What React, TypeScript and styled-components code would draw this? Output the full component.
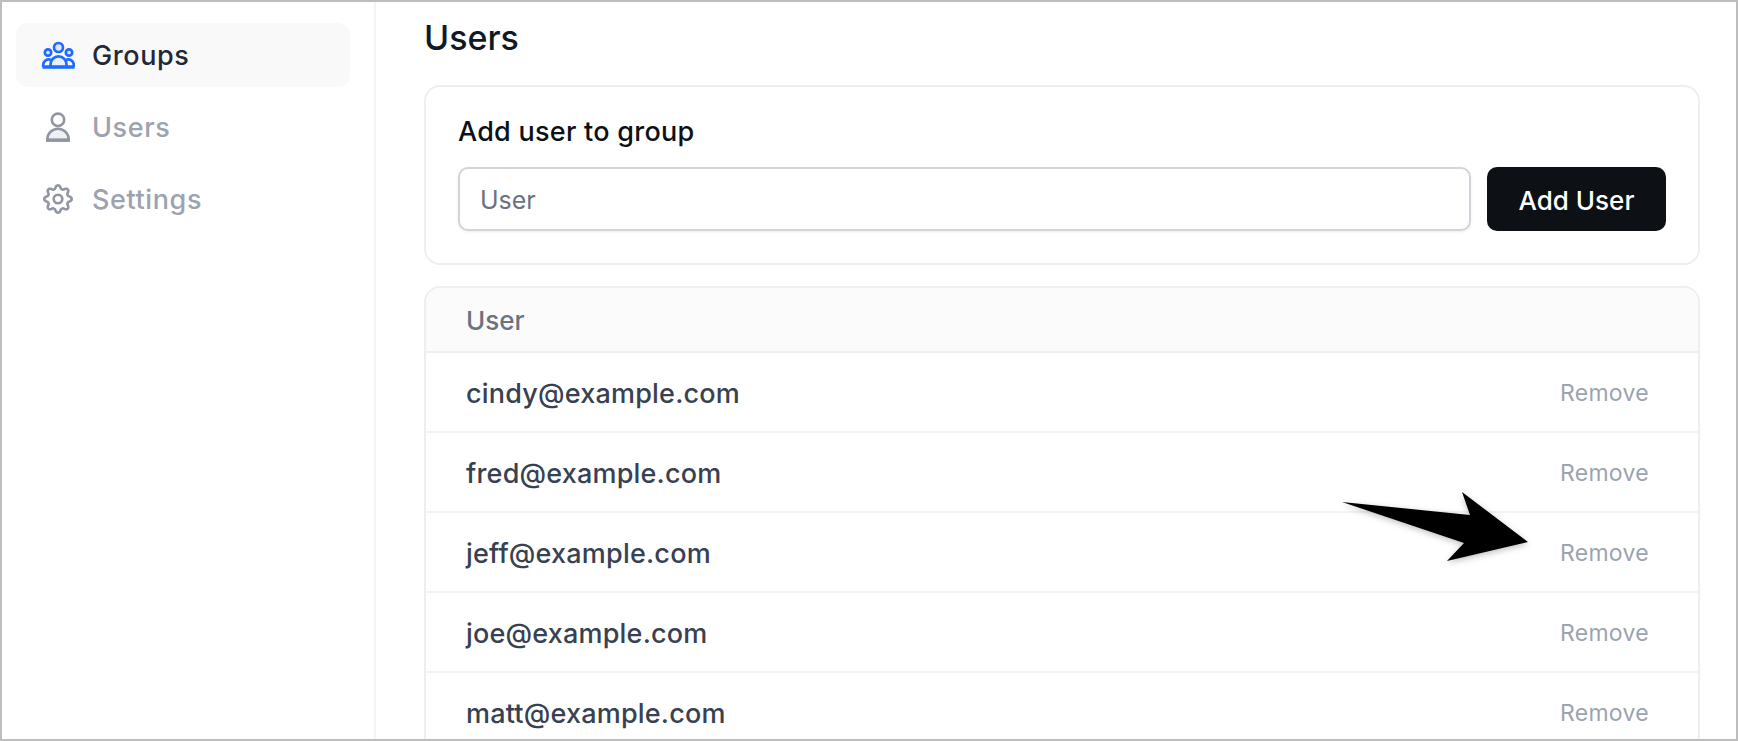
import React from "react";
import styled, { createGlobalStyle } from "styled-components";

const users = [
  "cindy@example.com",
  "fred@example.com",
  "jeff@example.com",
  "joe@example.com",
  "matt@example.com",
];

// eight soft lobes around the centre
function gearPath() {
  const pts: string[] = [];
  for (let i = 0; i < 96; i++) {
    const a = (i / 96) * Math.PI * 2;
    const r = 12 + 1.6 * Math.max(-0.8, Math.min(0.8, Math.cos(a * 8))) / 0.8;
    pts.push(`${(17 + r * Math.sin(a)).toFixed(2)} ${(15 - r * Math.cos(a)).toFixed(2)}`);
  }
  return `M${pts.join("L")}Z`;
}

function GroupsIcon() {
  return (
    <NavSvg viewBox="0 0 34 30" fill="none" stroke="currentColor" strokeWidth="2.7">
      <circle cx="17.5" cy="7.5" r="4.5" fill="#dbe7ff" />
      <circle cx="7" cy="12.5" r="3.2" fill="#dbe7ff" />
      <circle cx="28" cy="12.5" r="3.2" fill="#dbe7ff" />
      <path d="M9.5 27v-2.6a8 8 0 0 1 16 0V27z" fill="#e8f0ff" />
      <path d="M2.2 27v-2.2a5.6 5.6 0 0 1 7.6-5.1M32.8 27v-2.2a5.6 5.6 0 0 0-7.6-5.1" />
      <path d="M1.5 27h32" strokeWidth="3.4" />
    </NavSvg>
  );
}

function UserIcon() {
  return (
    <NavSvg viewBox="0 0 34 30" fill="none" stroke="currentColor" strokeWidth="2.6">
      <circle cx="17" cy="7.8" r="6.2" />
      <path d="M6.3 28v-.6a10.7 10.7 0 0 1 21.4 0v.6z" fill="#eef0f3" />
      <path d="M5 28.2h24" strokeWidth="3.4" />
    </NavSvg>
  );
}

function GearIcon() {
  return (
    <NavSvg viewBox="0 0 34 30" fill="none" stroke="currentColor" strokeWidth="2.6" strokeLinejoin="round">
      <path d={gearPath()} />
      <circle cx="17" cy="15" r="4.3" />
    </NavSvg>
  );
}

export default function App() {
  return (
    <Frame>
      <GlobalStyle />
      <Sidebar>
        <NavItem $active>
          <NavIcon $active><GroupsIcon /></NavIcon>
          Groups
        </NavItem>
        <NavItem>
          <NavIcon><UserIcon /></NavIcon>
          Users
        </NavItem>
        <NavItem>
          <NavIcon><GearIcon /></NavIcon>
          Settings
        </NavItem>
      </Sidebar>
      <Main>
        <Title>Users</Title>
        <Card>
          <CardLabel>Add user to group</CardLabel>
          <AddRow>
            <UserInput placeholder="User" />
            <AddButton>Add User</AddButton>
          </AddRow>
        </Card>
        <Table>
          <TableHead>User</TableHead>
          {users.map((email) => (
            <Row key={email}>
              <Email>{email}</Email>
              <RemoveLink>Remove</RemoveLink>
            </Row>
          ))}
        </Table>
      </Main>
      <Arrow viewBox="0 0 200 80">
        <path d="M2 12 L130 25 L122 2 L188 52 L107 71 L124 53 Z" fill="#000" />
      </Arrow>
    </Frame>
  );
}

const GlobalStyle = createGlobalStyle`
  html, body {
    margin: 0;
    padding: 0;
    background: #fff;
  }
  * {
    box-sizing: border-box;
  }
`;

const Frame = styled.div`
  position: relative;
  display: flex;
  height: 741px;
  overflow: hidden;
  border: 2px solid #bdbdbd;
  background: #fff;
  font-family: Inter, "Liberation Sans", sans-serif;
`;

const Sidebar = styled.nav`
  width: 374px;
  flex-shrink: 0;
  padding: 21px 24px 0 14px;
  border-right: 2px solid #f3f4f6;
  display: flex;
  flex-direction: column;
  gap: 8px;
`;

const NavItem = styled.a<{ $active?: boolean }>`
  display: flex;
  align-items: center;
  height: 64px;
  padding-left: 25px;
  border-radius: 12px;
  font-size: 27px;
  letter-spacing: 0.6px;
  font-weight: 500;
  color: ${(p) => (p.$active ? "#1f2937" : "#9ca3af")};
  background: ${(p) => (p.$active ? "#f9f9f9" : "transparent")};
`;

const NavIcon = styled.span<{ $active?: boolean }>`
  width: 34px;
  margin-right: 17px;
  display: flex;
  color: ${(p) => (p.$active ? "#1f6bff" : "#8f95a1")};
`;

const NavSvg = styled.svg`
  width: 34px;
  height: 30px;
`;

const Main = styled.main`
  flex: 1;
  min-width: 0;
  padding: 16px 36px 0 48px;
`;

const Title = styled.h1`
  margin: 0 0 27px;
  font-size: 34px;
  line-height: 40px;
  font-weight: 500;
  color: #111827;
`;

const Card = styled.section`
  height: 180px;
  padding: 29px 32px 0 32px;
  border: 2px solid #eeeef2;
  border-radius: 16px;
`;

const CardLabel = styled.div`
  font-size: 27px;
  letter-spacing: 0.25px;
  line-height: 32px;
  font-weight: 500;
  color: #0d1117;
  margin-bottom: 19px;
`;

const AddRow = styled.div`
  display: flex;
  gap: 16px;
`;

const UserInput = styled.input`
  flex: 1;
  min-width: 0;
  height: 64px;
  padding: 2px 20px 0;
  border: 2px solid #d1d5db;
  border-radius: 10px;
  box-shadow: 0 1px 3px rgba(0, 0, 0, 0.08);
  font-family: inherit;
  font-size: 25px;
  &::placeholder {
    color: #6b7280;
  }
`;

const AddButton = styled.button`
  width: 179px;
  height: 64px;
  padding: 2px 0 0;
  border: 0;
  border-radius: 10px;
  background: #0d1014;
  color: #fff;
  font-family: inherit;
  font-size: 26px;
  font-weight: 500;
`;

const Table = styled.section`
  margin-top: 21px;
  border: 2px solid #eeeef2;
  border-radius: 16px;
  overflow: hidden;
`;

const TableHead = styled.div`
  height: 65px;
  display: flex;
  align-items: center;
  padding: 1px 0 0 40px;
  background: #fbfbfc;
  border-bottom: 2px solid #eeeef2;
  font-size: 26px;
  font-weight: 500;
  color: #6b7280;
`;

const Row = styled.div`
  height: 80px;
  display: flex;
  align-items: center;
  justify-content: space-between;
  padding: 2px 49px 0 40px;
  border-bottom: 2px solid #f3f4f6;
`;

const Email = styled.span`
  font-size: 27px;
  letter-spacing: 0.2px;
  font-weight: 500;
  color: #374151;
`;

const RemoveLink = styled.a`
  font-size: 23px;
  letter-spacing: 0.3px;
  color: #9ca3af;
`;

const Arrow = styled.svg`
  position: absolute;
  left: 1338px;
  top: 488px;
  width: 200px;
  height: 80px;
  filter: drop-shadow(0 2px 3px rgba(0, 0, 0, 0.25));
`;
